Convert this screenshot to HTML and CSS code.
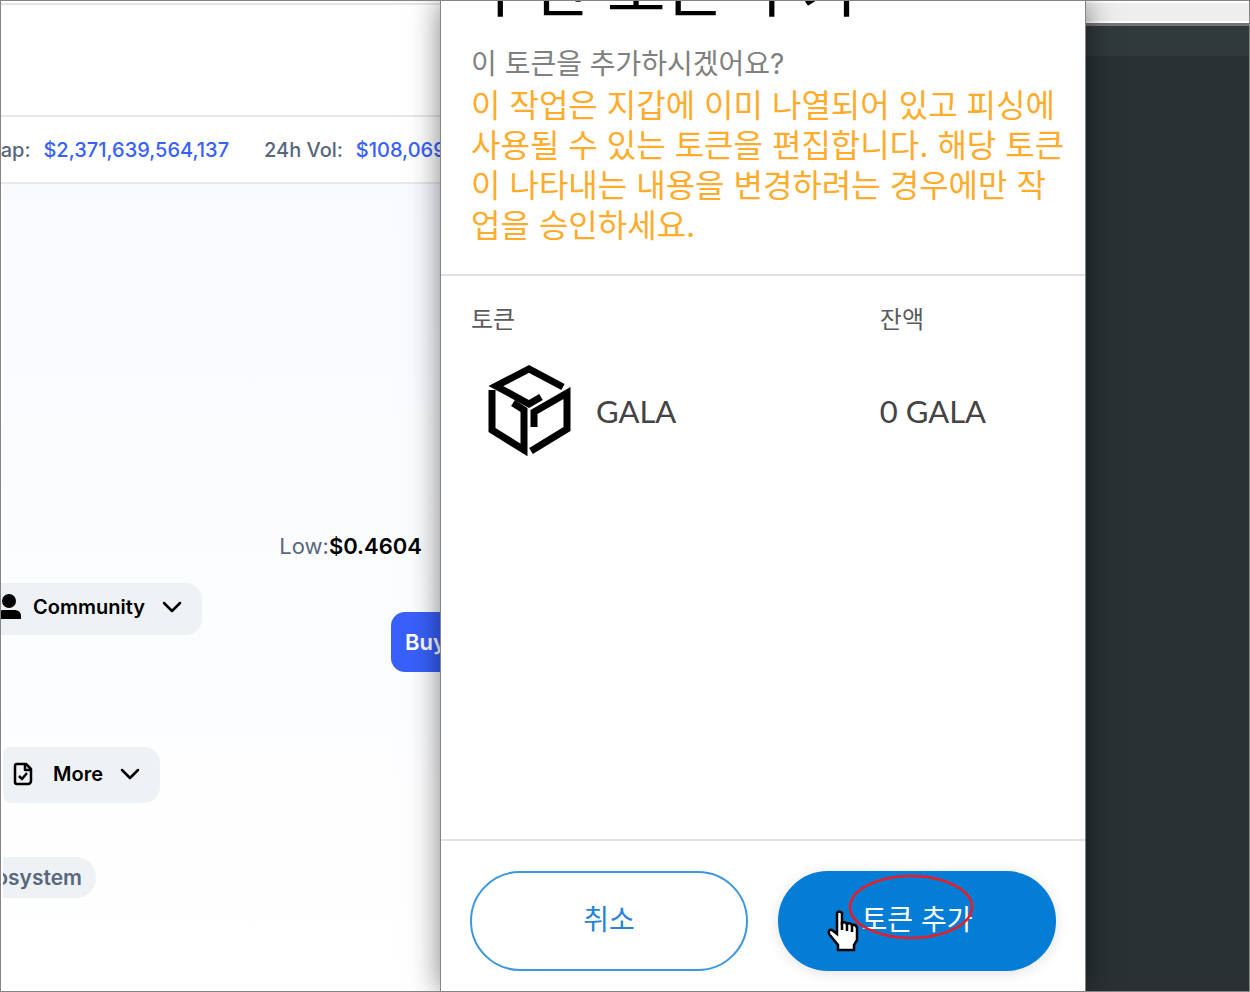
FILE: index.html
```
<!DOCTYPE html>
<html lang="ko">
<head>
<meta charset="utf-8">
<title>추천 토큰 추가</title>
<link rel="stylesheet" href="styles.css">
</head>
<body>
<div class="screen">
  <main class="market">
    <div class="nav"></div>
    <div class="stats">
      <span>Cap:</span><a href="#">$2,371,639,564,137</a>
      <span class="vol">24h Vol:</span><a href="#">$108,069</a>
    </div>
    <div class="coin">
      <p class="low">Low:<strong>$0.4604</strong></p>
      <div class="actions">
        <button class="pill community" type="button">
          <svg class="person" viewBox="0 0 24 26"><circle cx="12" cy="7" r="7"/><path d="M0 25v-3c0-4 3-6 7-6h10c4 0 7 2 7 6v3z"/></svg>
          Community
          <svg class="chevron" viewBox="0 0 20 12"><path d="M2 2l8 8 8-8"/></svg>
        </button>
        <button class="buy" type="button">Buy</button>
      </div>
      <button class="pill more" type="button">
        <svg class="doc" viewBox="0 0 20 24"><path d="M4 2h9l5 5v12a3 3 0 0 1-3 3H4a2 2 0 0 1-2-2V4a2 2 0 0 1 2-2z"/><path d="M12 2v6h6M6 14l3 3 5-6"/></svg>
        More
        <svg class="chevron" viewBox="0 0 20 12"><path d="M2 2l8 8 8-8"/></svg>
      </button>
      <a class="tag" href="#">Ecosystem</a>
    </div>
  </main>
  <section class="dialog">
    <header class="intro">
      <h1>추천 토큰 추가</h1>
      <p class="question">이 토큰을 추가하시겠어요?</p>
      <p class="warning">이 작업은 지갑에 이미 나열되어 있고 피싱에 사용될 수 있는 토큰을 편집합니다. 해당 토큰이 나타내는 내용을 변경하려는 경우에만 작업을 승인하세요.</p>
    </header>
    <div class="body">
      <table>
        <thead><tr><th>토큰</th><th class="amount">잔액</th></tr></thead>
        <tbody><tr>
          <td><div class="token">
            <svg class="logo" viewBox="0 0 84 92">
              <path d="M75 22L41 4 8 21l33 18 12-7"/>
              <path d="M4 25v40l32 20V45L25 38"/>
              <path d="M43 86l36-22V28L46 47v15"/>
            </svg>
            GALA</div></td>
          <td>0 GALA</td>
        </tr></tbody>
      </table>
    </div>
    <footer class="buttons">
      <button class="cancel" type="button">취소</button>
      <button class="add" type="button">토큰 추가
        <svg class="ring" viewBox="0 0 126 66"><ellipse cx="63" cy="33" rx="61" ry="31"/></svg>
        <svg class="hand" viewBox="0 0 32 42"><path d="M10 3q2-3 5 0v10q3-2 5 1 3-2 5 1 4-1 5 3v12l-3 5v5H11v-5L2 24q-1-5 3-4l5 4z"/><path class="fingers" d="M15 12v8M20 14v7M25 15v7"/></svg>
      </button>
    </footer>
  </section>
  <aside class="backdrop"></aside>
</div>
</body>
</html>
```
FILE: styles.css
```
* { box-sizing: border-box; }
body { margin: 0; font-family: Inter, "Noto Sans CJK KR", sans-serif; }
h1, p { margin: 0; font-weight: 400; }
button { font: inherit; cursor: pointer; }
a { text-decoration: none; }
svg { fill: none; stroke: #000; flex: none; }
.screen {
  display: grid;
  grid-template-columns: 439fr 646fr 163fr;
  height: 100vh;
  overflow: hidden;
  border: 1px solid #858383;
}
.market { display: flex; flex-direction: column; min-width: 0; overflow: hidden; white-space: nowrap; }
.nav { height: 114px; margin-top: 2px; border-top: 2px solid #e3e6e9; border-bottom: 2px solid #e5e7e9; }
.stats {
  display: flex;
  align-items: center;
  gap: 13px;
  height: 67px;
  margin-left: -15px;
  border-bottom: 2px solid #e6e9ec;
  color: #58667e;
  font-size: 20px;
  font-weight: 500;
}
.stats a { color: #3861fb; }
.vol { margin-left: 22px; }
.coin {
  flex: 1;
  display: flex;
  flex-direction: column;
  align-items: flex-start;
  margin-left: 2px;
  padding-top: 348px;
  background: linear-gradient(#f8fafe, #fff);
}
.low { align-self: flex-end; margin-right: 18px; color: #58667e; font-size: 22px; line-height: 28px; }
.low strong { color: #000; font-weight: 600; }
.actions { display: flex; justify-content: space-between; align-items: flex-start; align-self: stretch; margin-top: 23px; }
.pill { display: flex; align-items: center; border: 0; background: #eff2f5; color: #000; font-size: 20px; font-weight: 600; }
.community { height: 52px; margin-left: -6px; padding: 0 20px 4px 0; border-radius: 0 16px 16px 0; }
.person { width: 24px; height: 26px; margin-right: 12px; fill: #000; stroke: none; }
.chevron { width: 20px; height: 12px; margin-left: 17px; stroke-width: 2.5; stroke-linecap: round; stroke-linejoin: round; }
.buy {
  height: 60px;
  margin: 29px -40px 0 0;
  padding: 0 34px 0 14px;
  border: 0;
  border-radius: 14px;
  background: #3861fb;
  color: #fff;
  font-size: 22px;
  font-weight: 600;
}
.more { height: 56px; margin-top: 75px; padding: 0 20px 2px 10px; border-radius: 8px 16px 16px 8px; }
.doc { width: 20px; height: 24px; margin-right: 20px; stroke-width: 2.5; stroke-linejoin: round; }
.tag {
  display: flex;
  justify-content: flex-end;
  align-items: center;
  width: 93px;
  height: 41px;
  margin-top: 54px;
  padding-right: 14px;
  overflow: hidden;
  border-radius: 0 20px 20px 0;
  background: #eff2f5;
  color: #58667e;
  font-size: 21px;
  font-weight: 600;
}
.dialog {
  position: relative;
  display: flex;
  flex-direction: column;
  min-height: 0;
  min-width: 0;
  border: solid #858383;
  border-width: 0 1px;
  background: #fff;
  box-shadow: 0 0 28px rgba(0, 0, 0, .5);
}
.intro { padding: 0 20px 28px 30px; border-bottom: 2px solid #dfe2e5; overflow: hidden; }
h1 { margin-top: -60px; font-size: 64px; line-height: 94px; color: #000; }
.question { margin-top: 9px; font-size: 28px; line-height: 40px; color: #808080; }
.warning { margin-top: 2px; font-size: 32px; line-height: 40px; color: #ffab2b; word-break: break-all; }
.body { flex: 1; padding: 28px 30px; }
table { width: 100%; border-collapse: collapse; table-layout: fixed; color: #444; }
td { font-family: Lato, Inter, sans-serif; font-size: 31px; }
th, td { padding: 0; text-align: left; font-weight: 400; }
th { font-size: 24px; line-height: 32px; color: #5b5b5b; }
.amount { width: 30%; }
.token { display: flex; align-items: center; gap: 24px; height: 149px; padding-left: 17px; }
.logo { width: 84px; height: 92px; stroke-width: 7; }
.buttons { display: flex; gap: 30px; padding: 30px 29px 20px; border-top: 2px solid #dfe2e5; }
.buttons button { position: relative; flex: 1; height: 100px; padding: 0 0 6px; border-radius: 50px; font-size: 28px; }
.cancel { border: 2px solid #3b98e0; background: #fff; color: #2685d8; }
.add { border: 2px solid #037dd6; background: #037dd6; color: #fff; box-shadow: 0 2px 14px rgba(0, 0, 0, .12); }
.buttons .ring { position: absolute; left: 68px; top: 1px; width: 126px; height: 66px; stroke: #ec1c24; stroke-width: 2.5; }
.hand { position: absolute; left: 47px; top: 37px; width: 32px; height: 42px; fill: #fff; stroke-width: 2.5; }
.fingers { fill: none; }
.backdrop {
  background: linear-gradient(#fff 2px, #eee 2px, #eee 20px, #fff 20px, #fff 22px, #777 22px, #777 25px, #30393c 25px, #30393c 55px, #293134 55px);
}
```
